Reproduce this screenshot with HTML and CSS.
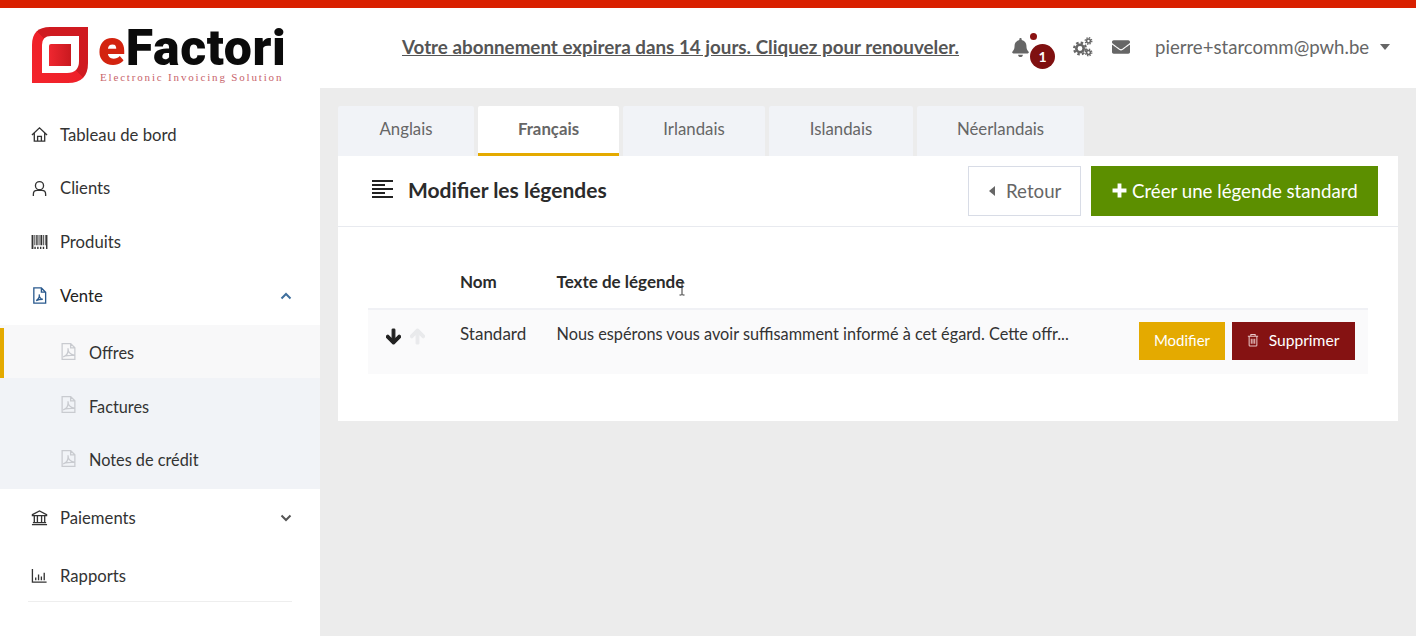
FILE: index.html
```html
<!DOCTYPE html>
<html lang="fr">
<head>
<meta charset="utf-8">
<title>eFactori</title>
<link rel="stylesheet" href="styles.css">
</head>
<body>
<div class="topbar"></div>
<header class="header">
  <a class="logo">
    <svg class="logo-mark" viewBox="0 0 56 56">
      <defs>
        <linearGradient id="lg" x1="0" y1="1" x2="1" y2="0"><stop offset="0" stop-color="#f4242c"/><stop offset=".5" stop-color="#ee2028"/><stop offset=".5" stop-color="#cf1a20"/><stop offset="1" stop-color="#d01a20"/></linearGradient>
        <linearGradient id="lg2" x1="0" y1="1" x2="1" y2="1"><stop offset="0" stop-color="#ef2730"/><stop offset="1" stop-color="#c9191f"/></linearGradient>
      </defs>
      <path d="M18 0H56V36Q56 56 36 56H0V18Q0 0 18 0Z" fill="url(#lg)"/>
      <path d="M19 9H47V34Q47 46 35 46H10V18Q10 9 19 9Z" fill="#fff"/>
      <path d="M19 17H39V39H17V19Q17 17 19 17Z" fill="url(#lg2)"/>
    </svg>
    <div class="logo-text">
      <div class="logo-name"><span class="logo-e">e</span>Factori</div>
      <div class="logo-tag">Electronic Invoicing Solution</div>
    </div>
  </a>
  <div class="notice"><a>Votre abonnement expirera dans 14 jours. Cliquez pour renouveler.</a></div>
  <div class="tools">
    <div class="bell">
      <svg class="ico-bell" viewBox="0 0 448 512"><path d="M224 512c35.32 0 63.97-28.65 63.97-64H160.03c0 35.35 28.65 64 63.97 64zm215.39-149.71c-19.32-20.76-55.47-51.99-55.47-154.29 0-77.7-54.48-139.9-127.94-155.16V32c0-17.67-14.32-32-31.98-32s-31.98 14.33-31.98 32v20.84C118.56 68.1 64.08 130.3 64.08 208c0 102.3-36.15 133.53-55.47 154.29-6 6.45-8.66 14.16-8.61 21.71.11 16.4 12.98 32 32.1 32h383.8c19.12 0 32-15.6 32.1-32 .05-7.55-2.61-15.27-8.61-21.71z"/></svg>
      <span class="dot"></span>
      <span class="badge">1</span>
    </div>
    <svg class="ico-cogs" viewBox="0 0 20 20">
      <g fill="none" stroke="#666">
        <circle cx="7" cy="11.500" r="3.700" stroke-width="2.600"/>
        <circle cx="7" cy="11.500" r="5.900" stroke-width="2.200" stroke-dasharray="2.500 2.130"/>
        <circle cx="15.500" cy="4" r="1.900" stroke-width="1.500"/>
        <circle cx="15.500" cy="4" r="3.300" stroke-width="1.300" stroke-dasharray="1.400 1.190"/>
        <circle cx="15.500" cy="15.500" r="1.900" stroke-width="1.500"/>
        <circle cx="15.500" cy="15.500" r="3.300" stroke-width="1.300" stroke-dasharray="1.400 1.190"/>
      </g>
    </svg>
    <svg class="ico-mail" viewBox="0 0 512 512"><path d="M502.3 190.8c3.9-3.1 9.7-.2 9.7 4.7V400c0 26.5-21.5 48-48 48H48c-26.5 0-48-21.5-48-48V195.6c0-5 5.7-7.8 9.7-4.7 22.4 17.4 52.1 39.5 154.1 113.6 21.1 15.4 56.7 47.8 92.2 47.6 35.7.3 72-32.8 92.3-47.6 102-74.1 131.6-96.3 154-113.7zM256 320c23.2.4 56.6-29.2 73.4-41.4 132.7-96.3 142.8-104.7 173.4-128.7 5.8-4.5 9.2-11.5 9.2-18.9v-19c0-26.5-21.5-48-48-48H48C21.5 64 0 85.5 0 112v19c0 7.4 3.4 14.3 9.2 18.9 30.6 23.9 40.7 32.4 173.4 128.7 16.8 12.2 50.2 41.8 73.4 41.4z"/></svg>
    <span class="user">pierre+starcomm@pwh.be</span>
    <span class="caret"></span>
  </div>
</header>
<div class="shell">
  <nav class="sidebar">
    <a class="nav-item"><svg class="nav-ico" viewBox="0 0 18 18"><path d="M1 9.500 9 2l8 7.500M3.500 7.500V16h11V7.500M7 16v-5h4v5"/></svg><span>Tableau de bord</span></a>
    <a class="nav-item"><svg class="nav-ico" viewBox="0 0 18 18"><circle cx="9" cy="6" r="4.300"/><path d="M2.500 17v-2q0-4 4-4h5q4 0 4 4v2"/></svg><span>Clients</span></a>
    <a class="nav-item"><svg class="nav-ico barcode" viewBox="0 0 17 15"><path d="M0 0h2v15H0zM3 0h1v11H3zM5 0h1.500v11H5zM7.500 0h1v11h-1zM9.500 0h2v11h-2zM12.500 0h1v11h-1zM14.500 0h.700v11h-.700zM15.500 0H17v15h-1.500zM3 12.500h1.500V15H3zM6 12.500h1.500V15H6zM9 12.500h1.500V15H9zM12 12.500h1.500V15H12z"/></svg><span>Produits</span></a>
    <a class="nav-item active"><svg class="nav-ico pdf-blue" viewBox="0 0 18 18"><path d="M3 1h8l4.500 4.500V17H3zM11 1v4.500h4.500M5.500 14.500c2-1 4-4 3.200-6.500-.3 2.500 1.800 5 3.800 5-2 0-5 .3-7 1.500Z"/></svg><span>Vente</span><svg class="chev up" viewBox="0 0 12 8"><path d="M1.500 6.500 6 2l4.500 4.500"/></svg></a>
    <div class="submenu">
      <a class="sub-item current"><svg class="sub-ico" viewBox="2 1 14 16"><path d="M3 1.500h8l4 4v11H3zM11 1.500v4h4M4 14c3-1 5-4 4.500-8 0 4 3 6 6 6.500-3 0-7 0-10.500 1.500Z"/></svg><span>Offres</span></a>
      <a class="sub-item"><svg class="sub-ico" viewBox="2 1 14 16"><path d="M3 1.500h8l4 4v11H3zM11 1.500v4h4M4 14c3-1 5-4 4.500-8 0 4 3 6 6 6.500-3 0-7 0-10.500 1.500Z"/></svg><span>Factures</span></a>
      <a class="sub-item last"><svg class="sub-ico" viewBox="2 1 14 16"><path d="M3 1.500h8l4 4v11H3zM11 1.500v4h4M4 14c3-1 5-4 4.500-8 0 4 3 6 6 6.500-3 0-7 0-10.500 1.500Z"/></svg><span>Notes de crédit</span></a>
    </div>
    <a class="nav-item pay"><svg class="nav-ico" viewBox="0 0 18 18"><path d="M1.500 6 9 2l7.500 4v1h-15zM3.500 7.500V14M6.800 7.500V14M11.200 7.500V14M14.500 7.500V14M2 14.500h14M1 16.500h16"/></svg><span>Paiements</span><svg class="chev" viewBox="0 0 12 8"><path d="M1.500 1.500 6 6l4.500-4.500"/></svg></a>
    <a class="nav-item rep"><svg class="nav-ico" viewBox="0 0 18 18"><path d="M1.500 2v14h15M5 11v3M8 8v6M11 10V14M14 6v8"/></svg><span>Rapports</span></a>
    <div class="nav-rule"></div>
  </nav>
  <main class="content">
    <div class="tabs">
      <a class="tab t1">Anglais</a>
      <a class="tab t2 on">Français</a>
      <a class="tab t3">Irlandais</a>
      <a class="tab t4">Islandais</a>
      <a class="tab t5">Néerlandais</a>
    </div>
    <section class="card">
      <div class="card-head">
        <svg class="ico-align" viewBox="0 0 21 18"><path d="M0 1h21M0 5h13M0 9h21M0 13h13M0 17h21"/></svg>
        <h1 class="title">Modifier les légendes</h1>
        <a class="btn btn-back"><span class="tri"></span>Retour</a>
        <a class="btn btn-new"><svg class="ico-plus" viewBox="0 0 14 14"><path d="M7 .5v13M.5 7h13"/></svg>Créer une légende standard</a>
      </div>
      <div class="card-body">
        <div class="thead">
          <div class="c-arrows"></div>
          <div class="c-name">Nom</div>
          <div class="c-text">Texte de légende</div>
        </div>
        <div class="trow">
          <div class="c-arrows">
            <svg class="arrow" viewBox="0 0 448 512"><path d="M413.1 222.5l22.2 22.2c9.4 9.4 9.4 24.6 0 33.9L241 473c-9.4 9.4-24.6 9.4-33.900 0L12.700 278.600c-9.400-9.400-9.400-24.600 0-33.900l22.200-22.200c9.500-9.500 25-9.300 34.300.4L184 343.400V56c0-13.300 10.700-24 24-24h32c13.300 0 24 10.700 24 24v287.400l114.800-120.500c9.300-9.800 24.800-10 34.300-.4z"/></svg>
            <svg class="arrow off" viewBox="0 0 448 512"><path d="M34.900 289.500l-22.200-22.200c-9.400-9.400-9.400-24.600 0-33.900L207 39c9.400-9.400 24.600-9.400 33.900 0l194.300 194.300c9.400 9.400 9.400 24.600 0 33.900L413 289.400c-9.500 9.500-25 9.300-34.300-.4L264 168.600V456c0 13.300-10.700 24-24 24h-32c-13.300 0-24-10.700-24-24V168.600L69.200 289.100c-9.300 9.800-24.800 10-34.300.4z"/></svg>
          </div>
          <div class="c-name cell">Standard</div>
          <div class="c-text cell">Nous espérons vous avoir suffisamment informé à cet égard. Cette offr...</div>
          <div class="c-actions">
            <a class="btn-sm btn-edit">Modifier</a>
            <a class="btn-sm btn-del"><svg class="ico-trash" viewBox="0 0 14 16"><path d="M1 3.500h12M4.500 3.500V1.500h5v2M2.500 3.500V14q0 1 1 1h7q1 0 1-1V3.500M5 6.500V12.500M7 6.500V12.500M9 6.500V12.500"/></svg>Supprimer</a>
          </div>
        </div>
      </div>
    </section>
  </main>
</div>
<svg class="cursor" viewBox="0 0 8 14"><path d="M1.500 1h2l.5.500.5-.500h2M4 1.500v11M1.500 13h2l.5-.500.5.500h2"/></svg>
</body>
</html>
```

FILE: styles.css
```css
* { box-sizing: border-box; }
html, body { margin: 0; height: 100%; overflow: hidden; }
body { font-family: "Lato", "Open Sans", sans-serif; background: #ececec; color: #333; position: relative; }
a { color: inherit; text-decoration: none; }

.topbar { height: 8px; background: #d92000; }

.header { height: 80px; background: #fff; display: flex; align-items: center; }
.logo { width: 320px; padding: 14px 0 0 32px; display: flex; align-items: center; gap: 10px; flex: none; }
.logo-mark { width: 56px; height: 56px; flex: none; }
.logo-text { width: 190px; }
.logo-name { font-family: "Roboto", sans-serif; font-weight: 900; font-size: 50px; line-height: 42px; color: #0b0b0b; letter-spacing: .6px; white-space: nowrap; }
.logo-e { color: #d3230f; }
.logo-tag { font-family: "Liberation Serif", serif; font-size: 11px; line-height: 12px; margin-top: 2px; color: #c8646b; letter-spacing: 1.830px; padding-left: 2px; white-space: nowrap; }

.notice { flex: 1; text-align: center; padding: 0 0 4px 30px; font-size: 18.800px; font-weight: 700; color: #555; white-space: nowrap; }
.notice a { text-decoration: underline; }

.tools { width: 405px; flex: none; display: flex; align-items: center; color: #666; padding-bottom: 2px; }
.bell { position: relative; width: 17px; height: 19px; margin: 0 44px 0 1px; }
.ico-bell { display: block; width: 17px; height: 19px; fill: #666; }
.dot { position: absolute; left: 17.500px; top: -5px; width: 7px; height: 7px; border-radius: 50%; background: #8a1212; }
.badge { position: absolute; left: 18px; top: 6px; width: 25px; height: 25px; border-radius: 50%; background: #7f1010; color: #fff; font-size: 14px; font-weight: 700; line-height: 25px; text-align: center; }
.ico-cogs { width: 20px; height: 20px; margin-right: 19px; }
.ico-mail { width: 18px; height: 18px; fill: #666; margin-right: 25px; }
.user { font-size: 18.600px; color: #666; width: 225px; white-space: nowrap; }
.caret { width: 0; height: 0; border-left: 5.500px solid transparent; border-right: 5.500px solid transparent; border-top: 6px solid #666; }

.shell { display: flex; height: 548px; }
.sidebar { width: 320px; flex: none; background: #fff; padding-top: 20px; }
.nav-item { height: 53.500px; display: flex; align-items: center; padding: 0 28px 0 31px; font-size: 16.700px; color: #333; }
.nav-item span { margin-left: 12px; flex: 1; }
.nav-item.active { color: #222; padding-top: 1px; }
.nav-item.pay { height: 57px; }
.nav-item.rep { height: 55px; padding-top: 4px; }
.nav-ico { width: 17px; height: 17px; flex: none; fill: none; stroke: #333; stroke-width: 1.400; }
.nav-ico.barcode { height: 14px; fill: #333; stroke: none; }
.nav-ico.pdf-blue { stroke: #2a5a8e; }
.chev { width: 12px; height: 8px; fill: none; stroke: #555; stroke-width: 2; }
.chev.up { stroke: #3f6f9d; }
.submenu { background: #f1f3f7; margin-top: 3px; border-top: 3px solid #f8f8f9; }
.sub-item { height: 56px; display: flex; align-items: center; padding-left: 61px; font-size: 16.300px; color: #333; }
.sub-item span { margin-left: 13px; }
.sub-item.current { height: 50px; padding-bottom: 1px; background: #f8f8f9; box-shadow: inset 4px 0 0 #e4aa00; }
.sub-item.last { height: 55px; padding-bottom: 4px; }
.sub-ico { width: 15px; height: 17px; fill: none; stroke: #c9cbd0; stroke-width: 1.200; margin-top: -3px; flex: none; }
.nav-rule { height: 1px; margin: 0 28px; background: #eeeeee; }

.content { flex: 1; padding: 18px 18px 0 18px; }
.tabs { display: flex; gap: 4px; height: 50px; }
.tab { display: flex; align-items: center; justify-content: center; background: #f1f3f7; color: #666; font-size: 16.800px; padding-bottom: 6px; border-radius: 2px 2px 0 0; }
.t1 { width: 136px; }
.t2 { width: 141px; }
.t3 { width: 142px; }
.t4 { width: 144px; }
.t5 { width: 167px; }
.tab.on { background: #fff; font-weight: 700; box-shadow: inset 0 -3px 0 #e4aa00; }

.card { background: #fff; height: 265px; }
.card-head { height: 71px; display: flex; align-items: center; padding: 0 20px 1px 34px; border-bottom: 1px solid #e8eaef; }
.ico-align { width: 21px; height: 18px; fill: none; stroke: #222; stroke-width: 2; margin: -3px 15px 0 0; flex: none; }
.title { margin: 0 0 2px; flex: 1; font-size: 21px; font-weight: 700; color: #2b2b2b; }
.btn { display: flex; align-items: center; height: 50px; font-size: 18.700px; }
.btn-back { width: 113px; border: 1px solid #d8dce6; color: #666; padding-left: 20px; margin-right: 10px; }
.tri { width: 0; height: 0; border-top: 5px solid transparent; border-bottom: 5px solid transparent; border-right: 6px solid #666; margin-right: 11px; }
.btn-new { width: 287px; background: #5c8f00; color: #fff; padding-left: 21px; }
.ico-plus { width: 15px; height: 15px; fill: none; stroke: #fff; stroke-width: 3.600; margin-right: 5px; }

.card-body { padding: 0 30px; }
.thead { height: 83px; display: flex; align-items: center; padding-top: 27px; font-size: 17px; font-weight: 700; color: #2b2b2b; border-bottom: 2px solid #f0f1f5; }
.trow { height: 64px; display: flex; background: #fafafb; font-size: 17px; color: #333; padding-top: 12px; }
.c-arrows { width: 92px; flex: none; padding-left: 18px; display: flex; gap: 9px; }
.c-name { width: 96.500px; flex: none; }
.c-text { flex: 1; white-space: nowrap; }
.cell { padding-top: 1px; }
.trow .c-text { font-size: 16.300px; padding-top: 2px; }
.arrow { width: 15px; height: 17px; fill: #222; stroke: #222; stroke-width: 36; margin-top: 6px; }
.arrow.off { fill: #e9eaec; stroke: #e9eaec; }
.c-actions { display: flex; gap: 7px; padding-right: 13px; }
.btn-sm { height: 38px; padding-bottom: 2px; display: flex; align-items: center; justify-content: center; color: #fff; font-size: 15px; }
.btn-edit { width: 86px; background: #e4aa00; }
.btn-del { width: 123px; background: #851212; font-size: 15.600px; padding-right: 1px; }
.ico-trash { width: 12px; height: 14px; fill: none; stroke: #e8c6c6; stroke-width: 1.200; margin-right: 10px; }

.cursor { position: absolute; left: 678px; top: 282px; width: 8px; height: 14px; fill: none; stroke: #333; stroke-width: 1; }
```
